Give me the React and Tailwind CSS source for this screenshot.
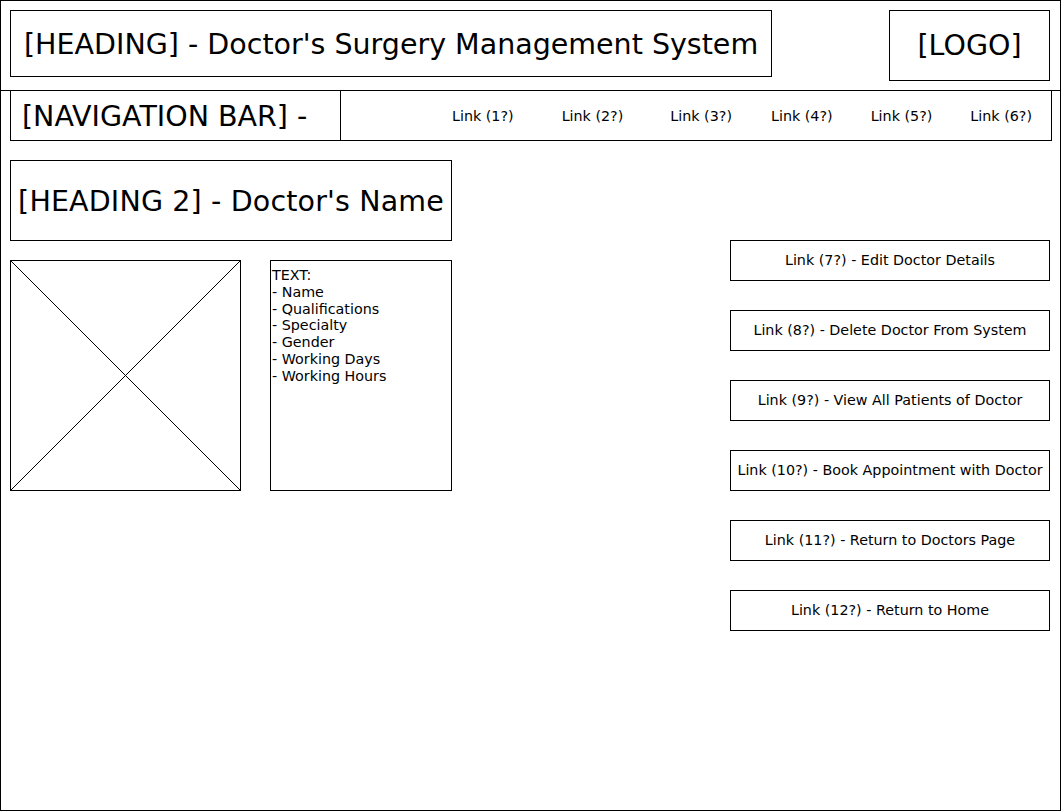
import React from 'react';

const navLinks = [
  { label: 'Link (1?)', ml: 'ml-[92px]' },
  { label: 'Link (2?)', ml: 'ml-[10px]' },
  { label: 'Link (3?)', ml: 'ml-[9px]' },
  { label: 'Link (4?)', ml: 'ml-[1px]' },
  { label: 'Link (5?)', ml: 'ml-0' },
  { label: 'Link (6?)', ml: 'ml-0' },
];

const actions = [
  'Link (7?) - Edit Doctor Details',
  'Link (8?) - Delete Doctor From System',
  'Link (9?) - View All Patients of Doctor',
  'Link (10?) - Book Appointment with Doctor',
  'Link (11?) - Return to Doctors Page',
  'Link (12?) - Return to Home',
];

const details = ['- Name', '- Qualifications', '- Specialty', '- Gender', '- Working Days', '- Working Hours'];

const App = () => {
  return (
    <div className="w-[1061px] h-[811px] border border-black bg-white text-black font-['DejaVu_Sans',sans-serif] overflow-hidden">
      {/* Header */}
      <div className="h-[90px] border-b border-black flex justify-between items-start pt-[9px] pl-[9px] pr-[10px]">
        <div className="w-[762px] h-[67px] border border-black flex items-center pl-[13px] pt-[3px] text-[28.5px] leading-none whitespace-nowrap">
          [HEADING] - Doctor's Surgery Management System
        </div>
        <div className="w-[161px] h-[71px] border border-black flex items-center justify-center pt-[2px] text-[28.5px] leading-none">
          [LOGO]
        </div>
      </div>

      {/* Navigation */}
      <div className="ml-[9px] w-[1042px] h-[50px] border-x border-b border-black flex items-center">
        <div className="w-[331px] h-full border-r border-black flex items-center pl-[11px] pt-[3px] text-[28.5px] leading-none whitespace-nowrap">
          [NAVIGATION BAR] -
        </div>
        {navLinks.map((l) => (
          <span key={l.label} className={`${l.ml} w-[100px] pt-[2px] text-center text-[14.3px] whitespace-nowrap`}>
            {l.label}
          </span>
        ))}
      </div>

      {/* Main */}
      <div className="flex">
        <div className="ml-[9px] w-[442px] mt-[19px]">
          <div className="h-[81px] border border-black flex items-center justify-center pt-[3px] text-[28.5px] leading-none whitespace-nowrap tracking-[0.15px]">
            [HEADING 2] - Doctor's Name
          </div>
          <div className="mt-[19px] flex gap-[29px]">
            <div className="relative w-[231px] h-[231px] border border-black">
              <svg className="absolute inset-0 w-full h-full" viewBox="0 0 229 229" preserveAspectRatio="none">
                <line x1="0" y1="0" x2="229" y2="229" stroke="#000" strokeWidth="1" />
                <line x1="229" y1="0" x2="0" y2="229" stroke="#000" strokeWidth="1" />
              </svg>
            </div>
            <div className="w-[182px] h-[231px] border border-black pl-[1px] pt-[6px] text-[14.3px] leading-[16.8px]">
              <div>TEXT:</div>
              {details.map((d) => (
                <div key={d}>{d}</div>
              ))}
            </div>
          </div>
        </div>

        <div className="ml-[278px] mt-[99px] w-[320px] flex flex-col gap-[29px]">
          {actions.map((a) => (
            <div
              key={a}
              className="h-[41px] border border-black flex items-center justify-center text-[14.3px] whitespace-nowrap"
            >
              {a}
            </div>
          ))}
        </div>
      </div>
    </div>
  );
};

export default App;
